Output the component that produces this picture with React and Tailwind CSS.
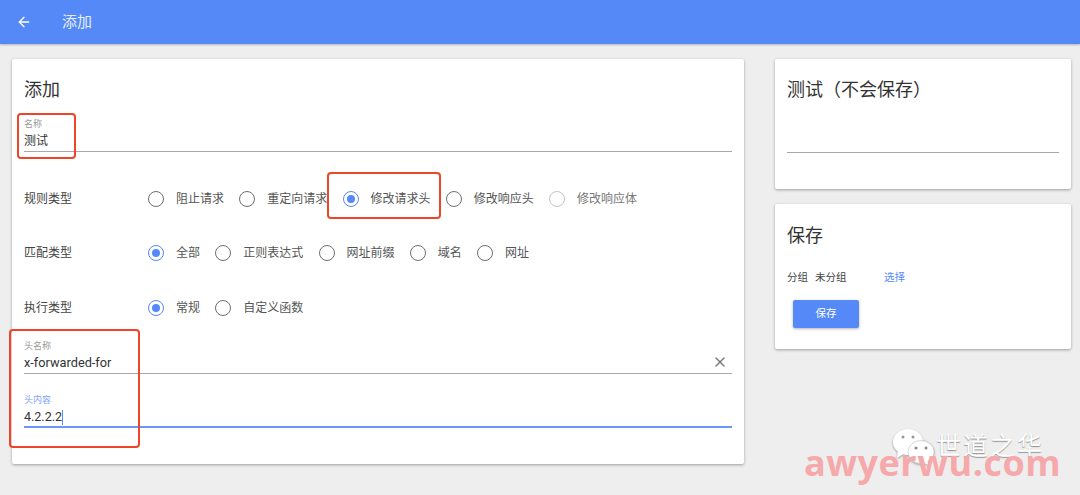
import React from "react";
import { ArrowLeft, X } from "lucide-react";

const FONT = "font-['Roboto','Noto_Sans_CJK_SC',sans-serif]";

const Radio = ({ label, checked, disabled }) => (
  <div className="flex items-center gap-3 mr-[15.25px]">
    <span
      className={
        "flex items-center justify-center size-[16px] rounded-full border-[1.5px] " +
        (checked ? "border-[#5589f8]" : disabled ? "border-[#c4c4c4]" : "border-[#6f6f6f]")
      }
    >
      {checked && <span className="size-[8px] rounded-full bg-[#5589f8]" />}
    </span>
    <span className={"text-[12px] leading-[16px] " + (disabled ? "text-[#777]" : "text-[#555]")}>{label}</span>
  </div>
);

const RadioRow = ({ title, options, className }) => (
  <div className={"flex items-center h-[20px] " + className}>
    <span className="w-[124px] text-[12px] text-[#444]">{title}</span>
    {options.map((o) => (
      <Radio key={o.label} {...o} />
    ))}
  </div>
);

const Field = ({ label, value, focused, clear, className, valueClass }) => (
  <div
    className={
      "relative h-[39px] pt-[5px] " +
      (focused ? "border-b-2 border-b-[#6a97f9] " : "border-b border-b-[#a8a8a8] ") +
      className
    }
  >
    <div className={"text-[9px] leading-[12px] " + (focused ? "text-[#7fa6f8]" : "text-[#9a9a9a]")}>{label}</div>
    <div className={"flex items-center leading-[18px] h-[21px] pt-[1px] text-[#333] " + valueClass}>
      {value}
      {focused && <span className="w-px h-[15px] bg-[#5589f8]" />}
    </div>
    {clear && <X className="absolute right-[4px] bottom-[3px] size-[16px] text-[#777]" strokeWidth={2} />}
  </div>
);

const Card = ({ className, children }) => (
  <div className={"bg-white rounded-[2px] shadow-[0_1px_3px_rgba(0,0,0,0.35)] px-3 " + className}>{children}</div>
);

export default function App() {
  return (
    <div className={"relative h-[495px] w-[1080px] overflow-hidden bg-[#eeeeee] " + FONT}>
      <header className="flex items-center h-[44px] bg-[#5589f8] shadow-[0_1px_2px_rgba(0,0,0,0.25)] pl-[16px] text-white">
        <ArrowLeft className="size-[16px]" strokeWidth={2} />
        <span className="ml-[30px] text-[15px] text-[#e6eefe]">添加</span>
      </header>

      <main className="flex items-start pt-[15px] pl-[12px] gap-[31px]">
        <Card className="w-[732px] h-[405px] pt-[19px]">
          <h1 className="text-[18px] leading-[24px] text-[#333]">添加</h1>
          <Field label="名称" value="测试" className="mt-[11px]" valueClass="text-[12px]" />
          <RadioRow
            className="mt-[37px]"
            title="规则类型"
            options={[
              { label: "阻止请求" },
              { label: "重定向请求" },
              { label: "修改请求头", checked: true },
              { label: "修改响应头" },
              { label: "修改响应体", disabled: true },
            ]}
          />
          <RadioRow
            className="mt-[34px]"
            title="匹配类型"
            options={[
              { label: "全部", checked: true },
              { label: "正则表达式" },
              { label: "网址前缀" },
              { label: "域名" },
              { label: "网址" },
            ]}
          />
          <RadioRow
            className="mt-[35px]"
            title="执行类型"
            options={[{ label: "常规", checked: true }, { label: "自定义函数" }]}
          />
          <Field label="头名称" value="x-forwarded-for" clear className="mt-[17px]" valueClass="text-[12.75px]" />
          <Field label="头内容" value="4.2.2.2" focused className="mt-[15px]" valueClass="text-[12.5px]" />
        </Card>

        <div className="flex flex-col gap-[15px] w-[296px]">
          <Card className="h-[130px] pt-[19px]">
            <h2 className="text-[18px] leading-[24px] text-[#333]">测试（不会保存）</h2>
            <div className="mt-[50px] border-b border-[#a8a8a8]" />
          </Card>
          <Card className="h-[145px] pt-[20px]">
            <h2 className="text-[18px] leading-[24px] text-[#333]">保存</h2>
            <div className="flex items-center mt-[22px] text-[10.5px] leading-[16px] text-[#444]">
              <span className="mr-[7px]">分组</span>
              <span className="w-[69px]">未分组</span>
              <span className="text-[#5589f8]">选择</span>
            </div>
            <button className="block mt-[14px] ml-[6px] w-[66px] h-[28px] rounded-[2px] bg-[#5589f8] text-white text-[10.5px] shadow-[0_1px_3px_rgba(0,0,0,0.3)]">
              保存
            </button>
          </Card>
        </div>
      </main>

      {/* red annotation boxes drawn over the shot */}
      <div className="absolute left-[17px] top-[113px] w-[59px] h-[46px] rounded-[4px] border-2 border-[#ee4528]" />
      <div className="absolute left-[327px] top-[172px] w-[114px] h-[47px] rounded-[4px] border-2 border-[#ee4528]" />
      <div className="absolute left-[9px] top-[329px] w-[131px] h-[119px] rounded-[4px] border-2 border-[#ee4528]" />

      {/* watermark */}
      <div className="absolute left-[891px] top-[426px] flex items-center">
        <svg width="46" height="44" viewBox="0 0 46 44" className="drop-shadow-[0_1px_1px_rgba(0,0,0,0.35)]">
          <ellipse cx="17" cy="16" rx="15" ry="13" fill="#fff" />
          <path d="M7 25 L6 32 L14 27 Z" fill="#fff" />
          <ellipse cx="30" cy="26" rx="13" ry="11.5" fill="#fff" stroke="#bbb" strokeWidth="0.6" />
          <path d="M36 35 L39 40 L31 36 Z" fill="#fff" />
          <circle cx="12" cy="11" r="1.5" fill="#999" />
          <circle cx="22" cy="11" r="1.5" fill="#999" />
          <circle cx="25" cy="22" r="1.5" fill="#888" />
          <circle cx="35" cy="22" r="1.5" fill="#888" />
        </svg>
        <span className="-ml-[1px] -mt-[2px] text-[25px] leading-[30px] tracking-[2px] text-white [text-shadow:0_1px_1px_rgba(0,0,0,0.4)]">世道之华</span>
      </div>
      <div className="absolute left-[804px] top-[441px] text-[36px] leading-[44px] font-bold tracking-[0.5px] text-[#f6a9ab] font-['Open_Sans',sans-serif]">
        awyerwu.com
      </div>
    </div>
  );
}
